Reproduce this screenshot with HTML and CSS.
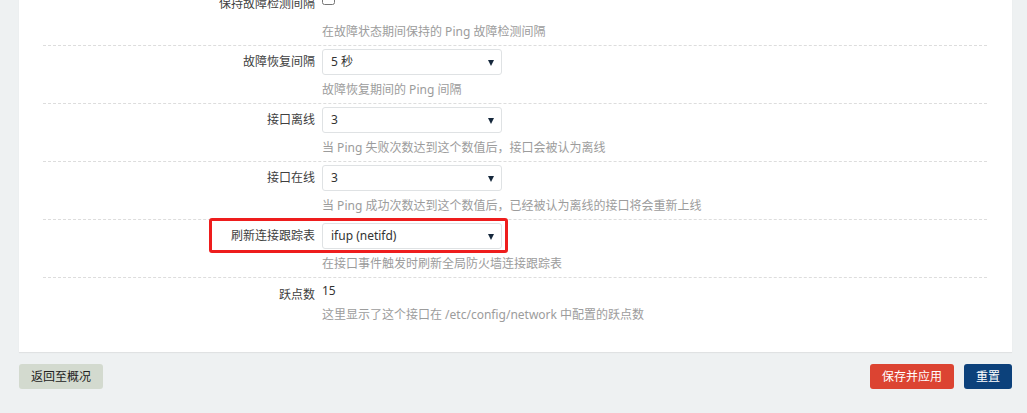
FILE: index.html
```html
<!DOCTYPE html>
<html lang="zh-CN">
<head>
    <meta charset="UTF-8">
    <title>接口设置</title>
    <link rel="stylesheet" href="styles.css">
</head>
<body>
    <div class="panel">
        <div class="row">
            <label class="row-label">保持故障检测间隔</label>
            <div class="row-field">
                <input type="checkbox" class="check">
            </div>
            <div class="row-hint">在故障状态期间保持的 Ping 故障检测间隔</div>
        </div>

        <div class="row">
            <label class="row-label">故障恢复间隔</label>
            <div class="row-field">
                <div class="select">5 秒</div>
            </div>
            <div class="row-hint">故障恢复期间的 Ping 间隔</div>
        </div>

        <div class="row">
            <label class="row-label">接口离线</label>
            <div class="row-field">
                <div class="select">3</div>
            </div>
            <div class="row-hint">当 Ping 失败次数达到这个数值后，接口会被认为离线</div>
        </div>

        <div class="row">
            <label class="row-label">接口在线</label>
            <div class="row-field">
                <div class="select">3</div>
            </div>
            <div class="row-hint">当 Ping 成功次数达到这个数值后，已经被认为离线的接口将会重新上线</div>
        </div>

        <div class="row marked">
            <label class="row-label">刷新连接跟踪表</label>
            <div class="row-field">
                <div class="select">ifup (netifd)</div>
            </div>
            <div class="row-hint">在接口事件触发时刷新全局防火墙连接跟踪表</div>
            <span class="highlight"></span>
        </div>

        <div class="row last">
            <label class="row-label">跃点数</label>
            <div class="row-value">15</div>
            <div class="row-hint">这里显示了这个接口在 /etc/config/network 中配置的跃点数</div>
        </div>
    </div>

    <div class="actions">
        <button class="btn btn-back">返回至概况</button>
        <div class="actions-right">
            <button class="btn btn-apply">保存并应用</button>
            <button class="btn btn-reset">重置</button>
        </div>
    </div>
</body>
</html>
```

FILE: styles.css
```css
:root {
    --bg: #eef1f2;
    --panel: #ffffff;
    --text: #404040;
    --hint: #9c9c9c;
    --line: #dddddd;
    --mark: #ee1d1d;
}

* {
    box-sizing: border-box;
}

body {
    margin: 0;
    background: var(--bg);
    font-family: "Noto Sans", "Noto Sans CJK SC", sans-serif;
    font-size: 12px;
    color: var(--text);
    overflow: hidden;
}

/* Panel */
.panel {
    background: var(--panel);
    margin: -12px 15px 0 19px;
    padding: 0 25px 24px 24px;
    box-shadow: 0 1px 1px rgba(0, 0, 0, 0.06);
}

.row {
    position: relative;
    display: grid;
    grid-template-columns: 279px 1fr;
    padding: 3px 0 4px;
    border-bottom: 1px dashed var(--line);
}

.row.last {
    border-bottom: none;
    padding-top: 4px;
}

.row-label {
    grid-column: 1;
    text-align: right;
    padding-right: 7px;
    line-height: 26px;
    color: var(--text);
}

.row.last .row-label {
    line-height: 18px;
    padding-top: 4px;
}

.row-field {
    grid-column: 2;
    height: 26px;
}

.row-value {
    grid-column: 2;
    line-height: 18px;
    color: #333;
}

.row-hint {
    grid-column: 2;
    margin-top: 6px;
    line-height: 18px;
    color: var(--hint);
}

.row.last .row-hint {
    margin-top: 2px;
}

.check {
    margin: 1px 0 0;
    width: 13px;
    height: 13px;
}

.select {
    position: relative;
    width: 180px;
    height: 26px;
    line-height: 24px;
    padding-left: 8px;
    border: 1px solid #dfe2e4;
    border-radius: 3px;
    color: #333;
    background: #fff;
}

.select::after {
    content: "";
    position: absolute;
    right: 7px;
    top: 10px;
    border-left: 3px solid transparent;
    border-right: 3px solid transparent;
    border-top: 6px solid #16283c;
}

/* Annotation */
.highlight {
    position: absolute;
    left: 166px;
    top: -2px;
    width: 299px;
    height: 35px;
    border: 3px solid var(--mark);
    border-radius: 3px;
    pointer-events: none;
}

/* Footer buttons */
.actions {
    display: flex;
    justify-content: space-between;
    margin: 12px 15px 0 19px;
}

.actions-right {
    display: flex;
    gap: 10px;
}

.btn {
    height: 25px;
    padding: 0 12px;
    border: none;
    border-radius: 3px;
    font-family: inherit;
    font-size: 12px;
    line-height: 25px;
    cursor: pointer;
}

.btn-back {
    background: #d3dacf;
    color: #222;
}

.btn-apply {
    background: #dc4432;
    color: #fff;
}

.btn-reset {
    background: #0c417b;
    color: #fff;
}
```
